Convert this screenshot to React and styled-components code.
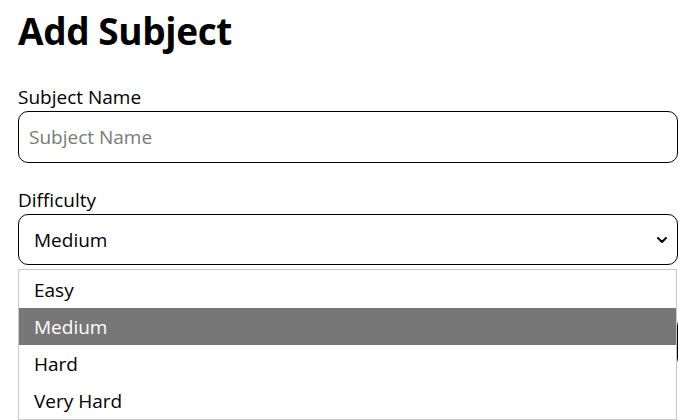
import React from 'react';
import styled, { createGlobalStyle } from 'styled-components';

const GlobalStyle = createGlobalStyle`
  * { box-sizing: border-box; }
  html, body { margin: 0; min-height: 420px; background: #fff; font-family: "Open Sans", "Noto Sans", sans-serif; color: #000; }
`;

const Page = styled.div`
  position: relative;
  min-height: 420px;
  padding: 5px 8px 0 18px;
`;

const Title = styled.h1`
  margin: 0 0 28px;
  font-size: 37px;
  font-weight: 700;
  line-height: 52px;
  letter-spacing: -0.4px;
`;

const Field = styled.div`
  display: flex;
  flex-direction: column;
  margin-bottom: 25px;
`;

const Label = styled.label`
  font-size: 19px;
  line-height: 24px;
  min-height: 24px;
  margin-bottom: 2px;
`;

const Input = styled.input`
  height: 52px;
  width: 100%;
  border: 1px solid #000;
  border-radius: 10px;
  padding: 0 10px;
  font-family: inherit;
  font-size: 19px;
  outline: none;
  &::placeholder { color: #7a7a7a; }
`;

const SelectBox = styled.div`
  position: relative;
  height: 51px;
  border: 1px solid #000;
  border-radius: 10px;
  display: flex;
  align-items: center;
  justify-content: space-between;
  padding: 0 9px 0 15px;
  font-size: 19px;
`;

const Chevron = styled.svg`
  width: 12px;
  height: 12px;
`;

const Menu = styled.ul`
  position: absolute;
  top: 269px;
  left: 18px;
  width: 659px;
  margin: 0;
  padding: 1px 0 0;
  list-style: none;
  background: #fff;
  border: 1px solid #c8c8c8;
  z-index: 2;
`;

const Option = styled.li`
  height: 37px;
  display: flex;
  align-items: center;
  padding-left: 15px;
  font-size: 19px;
  background: ${p => (p.$active ? '#777777' : '#fff')};
  color: ${p => (p.$active ? '#fff' : '#000')};
`;

const options = ['Easy', 'Medium', 'Hard', 'Very Hard'];

export default function App() {
  return (
    <>
      <GlobalStyle />
      <Page>
        <Title>Add Subject</Title>
        <Field>
          <Label>Subject Name</Label>
          <Input placeholder="Subject Name" />
        </Field>
        <Field>
          <Label>Difficulty</Label>
          <SelectBox>
            <span>Medium</span>
            <Chevron viewBox="0 0 12 12">
              <path d="M2 4l4 4 4-4" fill="none" stroke="#000" strokeWidth="2" strokeLinecap="round" strokeLinejoin="round" />
            </Chevron>
          </SelectBox>
        </Field>
        <Field>
          <Label />
          <Input />
        </Field>
        <Menu>
          {options.map(o => (
            <Option key={o} $active={o === 'Medium'}>{o}</Option>
          ))}
        </Menu>
      </Page>
    </>
  );
}
